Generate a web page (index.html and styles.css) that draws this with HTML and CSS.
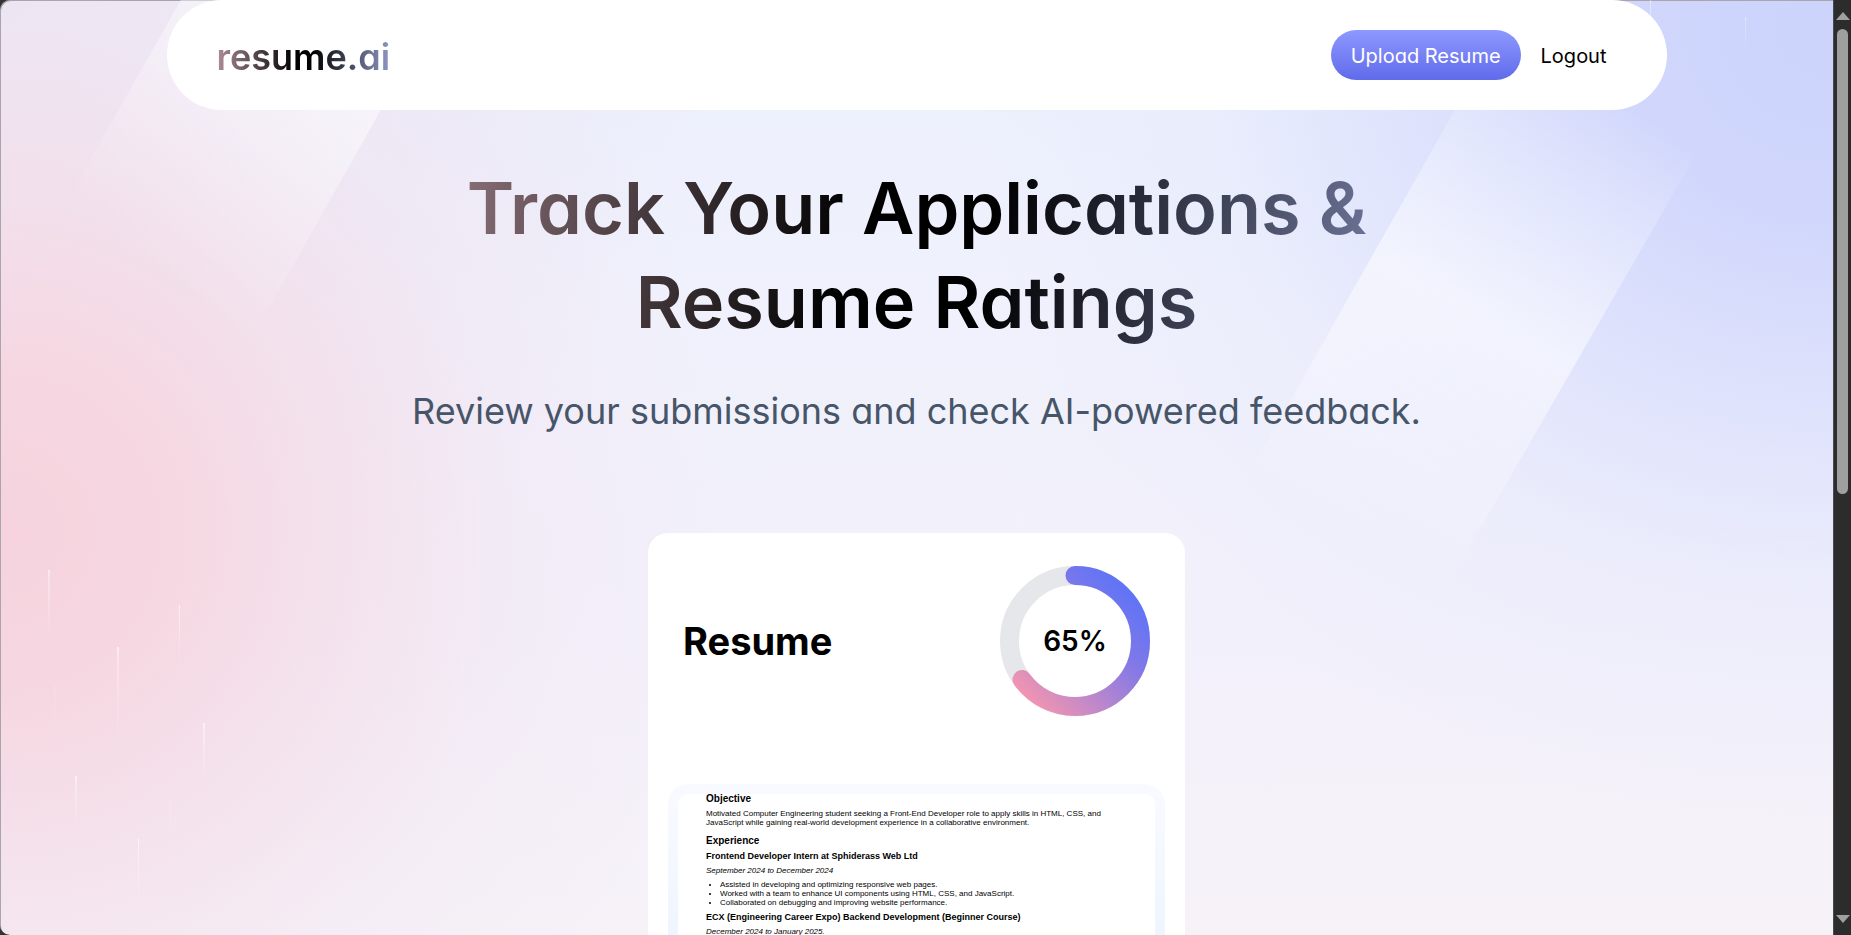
FILE: index.html
```html
<!DOCTYPE html>
<html lang="en">
<head>
<meta charset="utf-8">
<meta name="viewport" content="width=device-width, initial-scale=1">
<title>resume.ai</title>
<link rel="stylesheet" href="styles.css">
</head>
<body>
<div class="window">
  <div class="page">
    <svg class="backdrop" viewBox="0 0 1834 935" preserveAspectRatio="none" aria-hidden="true">
      <defs>
        <linearGradient id="beam-left" gradientUnits="userSpaceOnUse" x1="360" y1="60" x2="180" y2="290">
          <stop offset="0" stop-color="#fff" stop-opacity=".55"/>
          <stop offset="1" stop-color="#fff" stop-opacity="0"/>
        </linearGradient>
        <linearGradient id="beam-right" gradientUnits="userSpaceOnUse" x1="1640" y1="110" x2="1400" y2="560">
          <stop offset="0" stop-color="#fff" stop-opacity="0"/>
          <stop offset=".5" stop-color="#fff" stop-opacity=".55"/>
          <stop offset="1" stop-color="#fff" stop-opacity="0"/>
        </linearGradient>
        <linearGradient id="streak" x1="0" y1="0" x2="0" y2="1">
          <stop offset="0" stop-color="#fff" stop-opacity=".85"/>
          <stop offset=".1" stop-color="#fff" stop-opacity=".5"/>
          <stop offset="1" stop-color="#fff" stop-opacity="0"/>
        </linearGradient>
      </defs>
      <path fill="url(#beam-left)" d="M181 0H443L240 360H-23Z"/>
      <path fill="url(#beam-right)" d="M1518 0H1786L1440 600H1178Z"/>
      <g fill="url(#streak)">
        <rect x="48" y="570" width="2" height="72" opacity=".7"/>
        <rect x="179" y="605" width="1" height="64"/>
        <rect x="117" y="647" width="2" height="98" opacity=".7"/>
        <rect x="54" y="687" width="2" height="36" opacity=".2"/>
        <rect x="203" y="723" width="2" height="62" opacity=".8"/>
        <rect x="75" y="776" width="2" height="48" opacity=".8"/>
        <rect x="170" y="803" width="1" height="34" opacity=".5"/>
        <rect x="138" y="839" width="1" height="70"/>
        <rect x="1651" y="-10" width="1" height="62"/>
        <rect x="1746" y="17" width="1" height="34" opacity=".6"/>
      </g>
    </svg>

    <header class="navbar">
      <a class="logo" href="#">resume.ai</a>
      <nav class="actions">
        <a class="upload" href="#">Upload Resume</a>
        <button class="logout" type="button">Logout</button>
      </nav>
    </header>

    <main class="main">
      <section class="hero">
        <h1 class="title">Track Your Applications &amp; Resume Ratings</h1>
        <p class="subtitle">Review your submissions and check AI-powered feedback.</p>
      </section>

      <article class="card">
        <div class="card-head">
          <h2 class="card-title">Resume</h2>
          <div class="gauge">
            <svg class="ring" viewBox="0 0 150 150" aria-hidden="true">
              <defs>
                <linearGradient id="score" gradientUnits="userSpaceOnUse" x1="126" y1="128" x2="22" y2="20">
                  <stop offset="0" stop-color="#5f74f6"/>
                  <stop offset=".3" stop-color="#8078e8"/>
                  <stop offset="1" stop-color="#f395b0"/>
                </linearGradient>
              </defs>
              <circle cx="75" cy="75" r="65.5" fill="none" stroke="#e5e7eb" stroke-width="19"/>
              <circle cx="75" cy="75" r="65.5" fill="none" stroke="url(#score)" stroke-width="19" stroke-linecap="round" pathLength="100" stroke-dasharray="65 100" transform="rotate(-90 75 75)"/>
            </svg>
            <span class="score">65%</span>
          </div>
        </div>
        <div class="frame">
          <div class="sheet">
            <h3 class="sheet-section">Objective</h3>
            <p class="sheet-text">Motivated Computer Engineering student seeking a Front-End Developer role to apply skills in HTML, CSS, and<br>JavaScript while gaining real-world development experience in a collaborative environment.</p>
            <h3 class="sheet-section">Experience</h3>
            <h4 class="sheet-role">Frontend Developer Intern at Sphiderass Web Ltd</h4>
            <p class="sheet-date">September 2024 to December 2024</p>
            <ul class="sheet-list">
              <li>Assisted in developing and optimizing responsive web pages.</li>
              <li>Worked with a team to enhance UI components using HTML, CSS, and JavaScript.</li>
              <li>Collaborated on debugging and improving website performance.</li>
            </ul>
            <h4 class="sheet-role">ECX (Engineering Career Expo) Backend Development (Beginner Course)</h4>
            <p class="sheet-date">December 2024 to January 2025.</p>
          </div>
        </div>
      </article>
    </main>
  </div>
  <div class="scrollbar" aria-hidden="true">
    <svg class="arrow" viewBox="0 0 14 8"><path d="M7 0L14 8H0Z"/></svg>
    <div class="track"><div class="thumb"></div></div>
    <svg class="arrow" viewBox="0 0 14 8"><path d="M7 8L14 0H0Z"/></svg>
  </div>
</div>
</body>
</html>
```
FILE: styles.css
```css
* {
  box-sizing: border-box;
}

body {
  margin: 0;
  background: #333;
  font-family: Inter, "Liberation Sans", sans-serif;
  font-feature-settings: "cv11";
  color: #000;
}

h1, h2, h3, h4, p, ul {
  margin: 0;
}

.window {
  display: flex;
  height: 100vh;
  overflow: hidden;
}

.page {
  position: relative;
  flex: 1;
  overflow: hidden;
  border-radius: 10px 0 0 10px;
  box-shadow: inset 1px 1px 0 #aaa5ad;
  background:
    radial-gradient(48% 85% at 100% 3%, #ccd4fc 0%, #d0d6fc 22%, rgba(216, 221, 252, .8) 45%, rgba(228, 232, 252, .4) 72%, rgba(238, 240, 252, 0) 100%),
    radial-gradient(40% 78% at 0% 57%, #f6d3de 0%, #f6d7e1 22%, rgba(244, 220, 231, .75) 44%, rgba(243, 229, 240, .4) 70%, rgba(243, 235, 245, 0) 100%),
    radial-gradient(40% 70% at 0% 0%, #ebe5f4 0%, rgba(235, 230, 245, .7) 50%, rgba(235, 234, 248, 0) 100%),
    linear-gradient(180deg, #ebf0fd 0%, #f0f1fc 35%, #f2f0fb 65%, #f6f2f8 100%);
}

.backdrop {
  position: absolute;
  inset: 0;
  width: 100%;
  height: 100%;
}

.navbar {
  position: relative;
  display: flex;
  align-items: center;
  justify-content: space-between;
  max-width: 1500px;
  height: 110px;
  margin: 0 auto;
  padding: 0 60px 0 50px;
  border-radius: 55px;
  background: #fff;
}

.logo {
  padding-top: 3px;
  font-size: 36px;
  line-height: 48px;
  font-weight: 600;
  text-decoration: none;
  color: transparent;
  background: linear-gradient(90deg, #ab8c95, #000 45%, #000 55%, #8e97c5);
  background-clip: text;
}

.actions {
  display: flex;
  align-items: center;
  gap: 20px;
}

.upload,
.logout {
  padding: 11px 20px 9px;
  border: 0;
  border-radius: 25px;
  font: inherit;
  font-feature-settings: inherit;
  font-size: 20px;
  line-height: 30px;
}

.upload {
  background: linear-gradient(180deg, #8e98ff, #606beb);
  color: #fff;
  text-decoration: none;
}

.logout {
  padding-inline: 0;
  background: none;
  color: #000;
}

.main {
  position: relative;
  display: flex;
  flex-direction: column;
  align-items: center;
}

.hero {
  max-width: 1120px;
  padding: 51px 0 97px;
  text-align: center;
}

.title {
  max-width: 1120px;
  padding: 0 60px;
  font-size: 72px;
  line-height: 94px;
  font-weight: 600;
  color: transparent;
  background: linear-gradient(100deg, #ab8c95, #000 44%, #000 56%, #8e97c5);
  background-clip: text;
}

.subtitle {
  margin-top: 37px;
  font-size: 36px;
  line-height: 50px;
  font-weight: 400;
  color: #475569;
}

.card {
  width: 537px;
  padding: 0 20px;
  border-radius: 20px;
  background: #fff;
}

.card-head {
  display: flex;
  align-items: center;
  justify-content: space-between;
  padding: 33px 15px 68px;
}

.card-title {
  font-size: 38px;
  line-height: 50px;
  font-weight: 700;
}

.gauge {
  display: grid;
  place-items: center;
  width: 150px;
  height: 150px;
}

.gauge > * {
  grid-area: 1 / 1;
}

.score {
  font-size: 28px;
  font-weight: 600;
}

.frame {
  padding: 10px;
  border-radius: 20px;
  background: linear-gradient(180deg, #f9faff, #eff5fe 150px);
}

.sheet {
  padding: 0 28px 20px;
  border-radius: 10px;
  background: #fff;
  font-family: "Liberation Sans", Arial, sans-serif;
  font-size: 8px;
  line-height: 9px;
  white-space: nowrap;
}

.sheet-section {
  padding: 0 0 6px;
  font-size: 10px;
  line-height: 9px;
  font-weight: 700;
}

.sheet-text {
  padding-bottom: 9px;
}

.sheet-role {
  padding-bottom: 5px;
  font-size: 9px;
  line-height: 10px;
  font-weight: 700;
}

.sheet-date {
  padding-bottom: 5px;
  font-style: italic;
}

.sheet-list {
  padding: 0 0 5px 14px;
}

.scrollbar {
  display: flex;
  flex-direction: column;
  align-items: center;
  width: 18px;
  padding: 12px 0;
  border-left: 1px solid #4a4a50;
  background: #2c2c2c;
}

.arrow {
  width: 14px;
  height: 8px;
  fill: #a0a0a0;
}

.track {
  flex: 1;
  padding: 9px 0;
}

.thumb {
  width: 11px;
  height: 53%;
  border-radius: 6px;
  background: #9f9f9f;
}
```
